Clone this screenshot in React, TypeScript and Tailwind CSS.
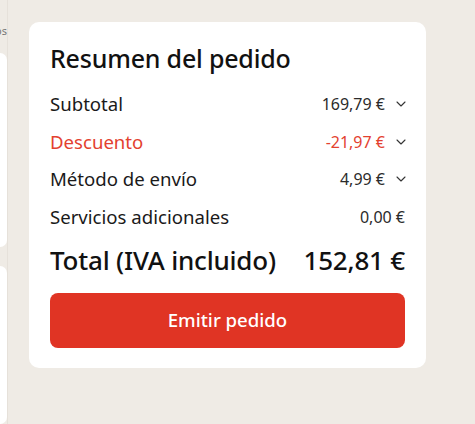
import { ChevronDown } from "lucide-react";

const ROWS = [
  { label: "Subtotal", value: "169,79 €", chevron: true, red: false },
  { label: "Descuento", value: "-21,97 €", chevron: true, red: true },
  { label: "Método de envío", value: "4,99 €", chevron: true, red: false },
  { label: "Servicios adicionales", value: "0,00 €", chevron: false, red: false },
];

export default function App() {
  return (
    <div
      className="flex w-[475px] h-[424px] overflow-hidden bg-[#efebe5] text-[#111]"
      style={{ fontFamily: "'Noto Sans', sans-serif" }}
    >
      {/* left column, mostly off screen */}
      <div className="flex flex-col w-[8px] shrink-0 border-r border-[#e6e1da]">
        <div className="h-[53px] pt-[23px] flex justify-end overflow-hidden">
          <span className="text-[11px] text-[#777] whitespace-nowrap">Ver todos</span>
        </div>
        <div className="h-[197px] bg-white rounded-r-[10px]" />
        <div className="mt-[19px] h-[160px] bg-white rounded-r-[10px]" />
      </div>

      {/* summary card */}
      <div className="ml-[21px] mt-[22px] w-[397px] h-[346px] bg-white rounded-[10px] px-[21px] pt-[19px]">
        <h2 className="text-[25px] font-medium leading-[34px] tracking-[-0.2px]">Resumen del pedido</h2>

        <div className="mt-[10px] flex flex-col">
          {ROWS.map((r) => (
            <div key={r.label} className="h-[37.7px] flex items-center justify-between">
              <span className={`text-[18.6px] ${r.red ? "text-[#e3412f]" : "text-[#1a1a1a]"}`}>{r.label}</span>
              <div className="flex items-center">
                <span className={`text-[16px] ${r.red ? "text-[#e3412f]" : "text-[#2b2b2b]"}`}>{r.value}</span>
                {r.chevron && (
                  <ChevronDown className="ml-[8px] -mr-[4px] w-[16px] h-[16px] text-[#333]" strokeWidth={1.6} />
                )}
              </div>
            </div>
          ))}
        </div>

        <div className="mt-[5px] h-[40px] flex items-center justify-between">
          <span className="text-[26px] font-medium tracking-[-0.2px]">Total (IVA incluido)</span>
          <span className="text-[26px] font-medium tracking-[-0.2px]">152,81 €</span>
        </div>

        <button className="mt-[12px] w-full h-[55px] rounded-[8px] bg-[#e03424] text-white text-[18.6px] font-medium">
          Emitir pedido
        </button>
      </div>
    </div>
  );
}
